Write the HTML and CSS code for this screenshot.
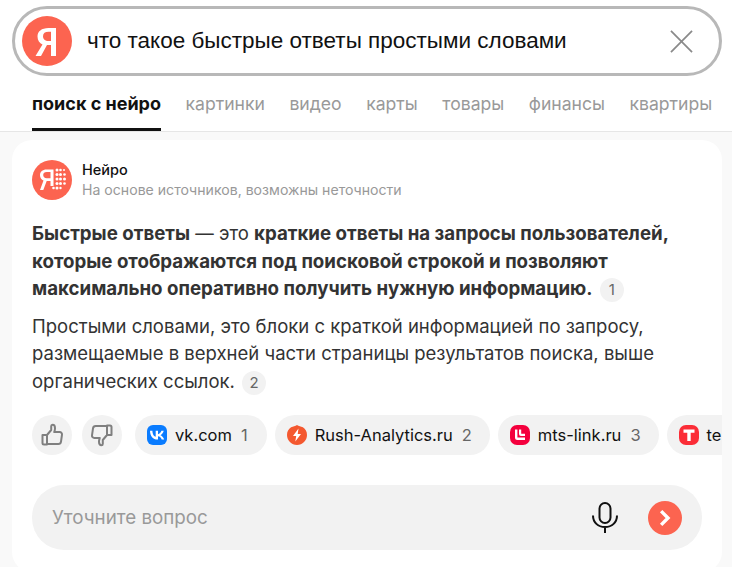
FILE: index.html
```html
<!DOCTYPE html>
<html lang="ru">
<head>
    <meta charset="UTF-8">
    <meta name="viewport" content="width=device-width, initial-scale=1.0">
    <title>что такое быстрые ответы простыми словами</title>
    <link rel="stylesheet" href="styles.css">
</head>
<body>
    <header class="top">
        <div class="search">
            <svg class="logo" viewBox="0 0 50 50">
                <circle cx="25" cy="25" r="25" fill="#fc6450"/>
                <path d="M34 40V12h-7.500C19.500 12 15.500 15.500 15.500 20.500c0 4 2 6.500 5 8L13.500 40h5.500l6-11H29v11zM29 25h-2.500c-3.400 0-5.500-1.900-5.500-4.800 0-3 2.100-4.400 5.500-4.400H29z" fill="#fff" fill-rule="evenodd"/>
            </svg>
            <div class="search-text">что такое быстрые ответы простыми словами</div>
            <svg class="clear" viewBox="0 0 24 24">
                <path d="M1 1l22 22M23 1L1 23" stroke="#8a8a8a" stroke-width="1.800" fill="none"/>
            </svg>
        </div>
        <nav class="tabs">
            <a class="tab active">поиск с нейро</a>
            <a class="tab">картинки</a>
            <a class="tab">видео</a>
            <a class="tab">карты</a>
            <a class="tab">товары</a>
            <a class="tab">финансы</a>
            <a class="tab">квартиры</a>
        </nav>
    </header>

    <main class="card">
        <div class="card-head">
            <svg class="neuro-logo" viewBox="0 0 40 40">
                <circle cx="20" cy="20" r="20" fill="#fc6450"/>
                <path d="M21.500 9.500h-7c-4 0-6.500 2.300-6.500 5.700 0 2.600 1.400 4.400 3.500 5.300L8 30h3.300l3.400-9h3.800v5h3zM18.500 18.200h-3.800c-2.200 0-3.500-1.200-3.500-3.100 0-2 1.300-3 3.500-3h3.800z" fill="#fff" fill-rule="evenodd"/>
                <g fill="#fff">
                    <circle cx="25" cy="10" r="1.500"/><circle cx="28.500" cy="10" r="1.300"/><circle cx="32" cy="10" r="1"/>
                    <circle cx="25" cy="14.500" r="1.500"/><circle cx="28.500" cy="14.500" r="1.500"/><circle cx="32.500" cy="14.500" r="1.300"/>
                    <circle cx="25" cy="19" r="1.500"/><circle cx="28.500" cy="19" r="1.500"/><circle cx="32.500" cy="19" r="1.500"/>
                    <circle cx="25" cy="23.500" r="1.500"/><circle cx="28.500" cy="23.500" r="1.500"/><circle cx="32.500" cy="23.500" r="1.300"/>
                    <circle cx="21.500" cy="28" r="1.300"/><circle cx="25" cy="28" r="1.500"/><circle cx="28.500" cy="28" r="1.200"/>
                </g>
            </svg>
            <div class="head-text">
                <div class="head-title">Нейро</div>
                <div class="head-sub">На основе источников, возможны неточности</div>
            </div>
        </div>

        <p class="answer"><b>Быстрые ответы</b> <span class="light">— это</span> <b>краткие ответы на запросы пользователей, которые отображаются под поисковой строкой и позволяют максимально оперативно получить нужную информацию.</b> <span class="ref">1</span></p>
        <p class="answer second">Простыми словами, это блоки с краткой информацией по запросу, размещаемые в верхней части страницы результатов поиска, выше органических ссылок. <span class="ref">2</span></p>

        <div class="sources">
            <button class="round">
                <svg viewBox="0 0 24 24" width="24" height="24"><path d="M2.500 12h4.500v9.500H4a1.500 1.500 0 0 1-1.500-1.500zM7 12l4.200-5V3.300c0-1 .7-1.500 1.400-1.500 1.400 0 2.400 1.400 2.400 3.400 0 1.400-.4 2.800-.8 3.900h5.500c1.500 0 2.500 1.100 2.300 2.500l-1 7c-.2 1.400-1.300 2.400-2.700 2.400H7z" fill="none" stroke="#7f7f7f" stroke-width="2" stroke-linejoin="round"/></svg>
            </button>
            <button class="round">
                <svg viewBox="0 0 24 24" width="24" height="24"><path d="M21.500 12H17V2.500h3a1.500 1.500 0 0 1 1.500 1.500zM17 12l-4.200 5v3.700c0 1-.7 1.500-1.400 1.500-1.400 0-2.400-1.400-2.400-3.400 0-1.400.4-2.800.8-3.900H4.300c-1.500 0-2.500-1.100-2.300-2.500l1-7c.2-1.400 1.300-2.400 2.700-2.400H17z" fill="none" stroke="#7f7f7f" stroke-width="2" stroke-linejoin="round"/></svg>
            </button>
            <a class="chip first">
                <svg class="fav" viewBox="0 0 20 20"><rect width="20" height="20" rx="6" fill="#0a7cff"/><path d="M10.700 14.500C5.900 14.500 3.200 11.200 3 5.700h2.400c.1 4 1.900 5.700 3.300 6V5.700h2.300v3.500c1.400-.2 2.900-1.700 3.400-3.500h2.300c-.4 2.200-2 3.800-3.200 4.500 1.200.6 3 2 3.700 4.300h-2.500c-.5-1.700-1.900-3-3.700-3.200v3.200z" fill="#fff"/></svg>
                <span class="chip-name">vk.com</span><span class="chip-num">1</span>
            </a>
            <a class="chip">
                <svg class="fav" viewBox="0 0 20 20"><path d="M10 0c1.600 1.300 3.900 1.500 5.900 2.300 2.600 1.600 4.100 4.500 4.100 7.700 0 5.500-4.500 10-10 10S0 15.500 0 10c0-3.200 1.500-6.100 4.100-7.700C6.100 1.500 8.400 1.300 10 0z" fill="#f4582f"/><path d="M11.500 3.500L6 11h3.200l-.9 5.500L14 9h-3.300z" fill="#fff"/></svg>
                <span class="chip-name">Rush-Analytics.ru</span><span class="chip-num">2</span>
            </a>
            <a class="chip">
                <svg class="fav" viewBox="0 0 20 20"><rect width="20" height="20" rx="7" fill="#f4003d"/><path d="M5 4.500h2.400v8h7.600V15H7.500A2.500 2.500 0 0 1 5 12.500zM9 4.500h2.200v4.300h3.800V11H11a2 2 0 0 1-2-2z" fill="#fff"/></svg>
                <span class="chip-name">mts-link.ru</span><span class="chip-num">3</span>
            </a>
            <a class="chip last">
                <svg class="fav" viewBox="0 0 20 20"><rect width="20" height="20" rx="7" fill="#fb2d37"/><path d="M4.500 4.500h11v3.200h-3.800V16H8.300V7.700H4.500z" fill="#fff"/></svg>
                <span class="chip-name">te</span>
            </a>
        </div>

        <div class="ask">
            <span class="ask-text">Уточните вопрос</span>
            <svg class="mic" viewBox="0 0 26 32" width="26" height="32">
                <rect x="7.500" y="1" width="11" height="20" rx="5.500" fill="none" stroke="#111" stroke-width="2"/>
                <path d="M1 13.500c0 7 5 11.500 12 11.500s12-4.500 12-11.500M13 25v6" fill="none" stroke="#111" stroke-width="2"/>
            </svg>
            <div class="send">
                <svg viewBox="0 0 14 20" width="12" height="18"><path d="M2.500 2l8 8-8 8" fill="none" stroke="#fff" stroke-width="4"/></svg>
            </div>
        </div>
    </main>
</body>
</html>
```

FILE: styles.css
```css
html, body {
    height: 100%;
}
body {
    margin: 0;
    overflow: hidden;
    background-color: #f9f9f9;
    font-family: Inter, "Liberation Sans", sans-serif;
    color: #222;
}
.top {
    background-color: #fff;
    padding-top: 6px;
    border-bottom: 1px solid #e6e6e6;
}
.search {
    display: flex;
    align-items: center;
    box-sizing: border-box;
    width: 710px;
    height: 70px;
    margin-left: 12px;
    padding: 0 26px 0 7px;
    border: 3px solid #b8b8b8;
    border-radius: 35px;
    background-color: #fff;
}
.logo {
    width: 50px;
    height: 50px;
    flex-shrink: 0;
}
.search-text {
    flex: 1;
    margin-left: 15px;
    font-family: "Liberation Sans", sans-serif;
    font-size: 22.5px;
    color: #111;
}
.clear {
    width: 23px;
    height: 23px;
}
.tabs {
    display: flex;
    gap: 24.5px;
    margin-left: 32px;
    height: 55px;
    white-space: nowrap;
}
.tab {
    box-sizing: border-box;
    height: 55px;
    padding-top: 17px;
    font-size: 17.6px;
    color: #999;
}
.tab.active {
    font-size: 18px;
    font-weight: 700;
    color: #111;
    border-bottom: 3px solid #111;
}
.card {
    box-sizing: border-box;
    width: 710px;
    height: 432px;
    margin: 8px 0 0 12px;
    padding: 20px 20px 0;
    border-radius: 20px;
    background-color: #fff;
}
.card-head {
    display: flex;
    align-items: center;
    gap: 10px;
}
.neuro-logo {
    width: 40px;
    height: 40px;
}
.head-title {
    font-size: 14.5px;
    font-weight: 500;
    color: #111;
    line-height: 20px;
}
.head-sub {
    font-size: 14.1px;
    color: #999;
    line-height: 20px;
}
.answer {
    margin: 20px 0 0;
    font-size: 18.5px;
    line-height: 27.5px;
    color: #333;
}
.answer b {
    font-size: 18.7px;
    font-weight: 700;
}
.answer .light {
    font-weight: 400;
}
.answer.second {
    margin-top: 10px;
}
.ref {
    display: inline-block;
    min-width: 24px;
    height: 24px;
    border-radius: 12px;
    background-color: #f2f2f2;
    font-size: 15px;
    line-height: 24px;
    text-align: center;
    color: #666;
    margin-left: 2px;
}
.sources {
    display: flex;
    align-items: center;
    gap: 8px;
    margin: 20px -20px 0 0;
    overflow: hidden;
    white-space: nowrap;
}
.round {
    flex-shrink: 0;
    display: flex;
    align-items: center;
    justify-content: center;
    width: 40px;
    height: 40px;
    padding: 0;
    border: none;
    border-radius: 50%;
    background-color: #f2f2f2;
}
.round + .round {
    margin-left: 2px;
}
.chip {
    flex-shrink: 0;
    display: flex;
    align-items: center;
    height: 40px;
    padding: 0 18px 0 12px;
    border-radius: 20px;
    background-color: #f2f2f2;
    font-size: 16.5px;
}
.chip.first {
    margin-left: 5px;
    padding-right: 19px;
}
.chip.last {
    width: 100px;
}
.fav {
    width: 20px;
    height: 20px;
    margin-right: 8px;
    flex-shrink: 0;
}
.chip-name {
    color: #111;
}
.chip-num {
    margin-left: 9px;
    color: #666;
}
.ask {
    display: flex;
    align-items: center;
    box-sizing: border-box;
    height: 65px;
    margin-top: 30px;
    padding: 0 20px;
    border-radius: 32px;
    background-color: #f2f2f2;
}
.ask-text {
    flex: 1;
    font-size: 18.8px;
    color: #999;
}
.mic {
    margin-right: 30px;
}
.send {
    display: flex;
    align-items: center;
    justify-content: center;
    width: 34px;
    height: 34px;
    border-radius: 50%;
    background-color: #fc6450;
}
```
